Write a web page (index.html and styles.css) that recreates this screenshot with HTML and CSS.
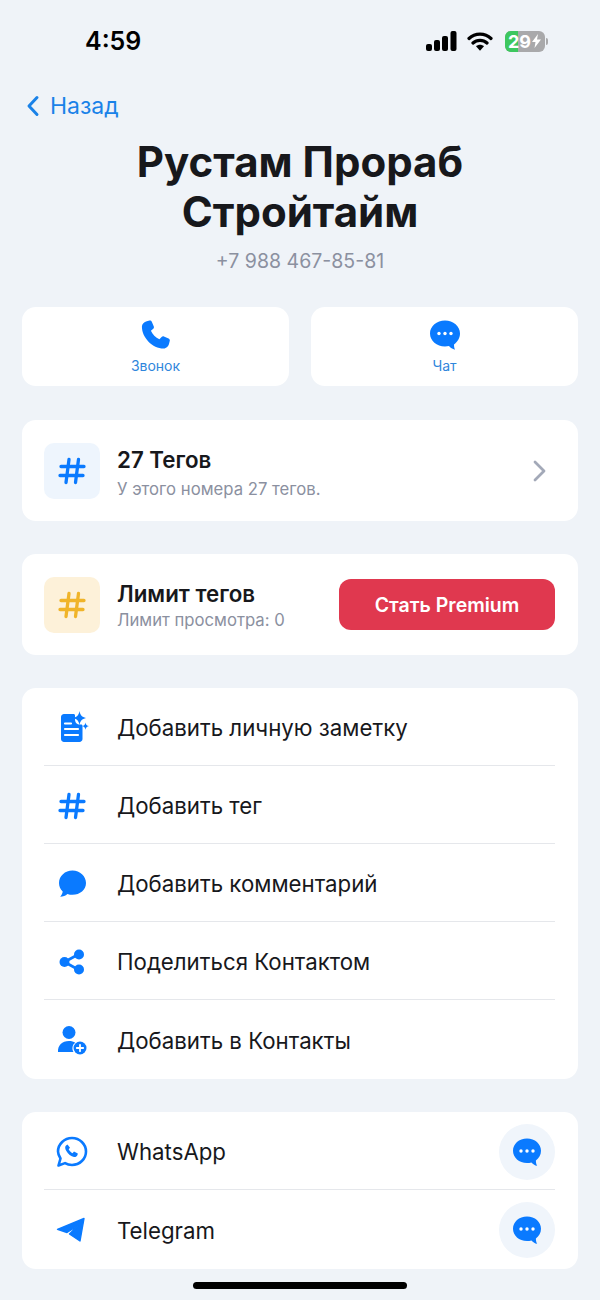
FILE: index.html
```html
<!DOCTYPE html>
<html lang="ru">

<head>
    <meta charset="UTF-8">
    <meta name="viewport" content="width=device-width, initial-scale=1.0">
    <title>Рустам Прораб Стройтайм</title>
    <link rel="stylesheet" href="styles.css">
</head>

<body>
    <svg class="sprite" width="0" height="0">
        <symbol id="hash" viewBox="0 0 28 28">
            <path d="M11 2.500 8 25.500M20.500 2.500 17.500 25.500M3 9.500H26M2 18.500H25" fill="none" stroke="currentColor" stroke-width="3.300" stroke-linecap="round" />
        </symbol>
        <symbol id="bubble" viewBox="0 0 30 30">
            <path d="M15 1.500C7 1.500 1 7 1 13.800 1 20.600 7 26 15 26c1.600 0 3-.2 4.400-.6 1.300 1.500 3.300 3 5.800 3.400-.9-1.300-1.300-3.300-1.300-5.300C27 21.200 29 17.800 29 13.800 29 7 23 1.500 15 1.500Z" fill="currentColor" />
            <circle cx="9" cy="14" r="1.700" fill="#fff" />
            <circle cx="15" cy="14" r="1.700" fill="#fff" />
            <circle cx="21" cy="14" r="1.700" fill="#fff" />
        </symbol>
    </svg>

    <div class="status-bar">
        <span class="time">4:59</span>
        <div class="status-icons">
            <svg width="31" height="20" viewBox="0 0 31 20">
                <rect x="0" y="13" width="6" height="7" rx="2" />
                <rect x="8" y="9" width="6" height="11" rx="2" />
                <rect x="16" y="5" width="6" height="15" rx="2" />
                <rect x="24.500" y="0" width="6" height="20" rx="2" />
            </svg>
            <svg width="26" height="20" viewBox="0 0 26 20">
                <path d="M2 7.500C8 1.700 18 1.700 24 7.500M6 12c3.900-3.600 10.100-3.600 14 0" fill="none" stroke="#000" stroke-width="3.200" stroke-linecap="round" />
                <path d="M9 15.300c2.400-2 5.600-2 8 0L13 19.800Z" />
            </svg>
            <div class="battery">
                <div class="battery-fill"></div>
                <span class="battery-num">29</span>
                <svg class="battery-bolt" width="9" height="14" viewBox="0 0 9 14">
                    <path d="M6 0 0 8h3.500L2.500 14 9 5.500H5Z" fill="#fff" />
                </svg>
            </div>
            <div class="battery-cap"></div>
        </div>
    </div>

    <div class="back">
        <svg width="14" height="22" viewBox="0 0 14 22">
            <path d="M11 2.500 3 11l8 8.500" fill="none" stroke="currentColor" stroke-width="3" stroke-linecap="round" stroke-linejoin="round" />
        </svg>
        <span>Назад</span>
    </div>

    <h1 class="name">Рустам Прораб<br>Стройтайм</h1>
    <p class="phone">+7 988 467-85-81</p>

    <div class="actions">
        <div class="card action">
            <svg class="action-icon" width="30" height="30" viewBox="0 0 30 30">
                <path d="M5.800 1.200 8.500.6c1-.2 1.900.3 2.300 1.200l2 4.600c.3.800.1 1.700-.5 2.300L9.900 10.700c1.500 3.600 4.700 6.900 8.500 8.600l2.200-2.300c.6-.6 1.500-.8 2.300-.5l4.700 2c.9.400 1.400 1.300 1.200 2.300l-.7 2.800c-.6 2.600-2.700 5-5.500 5C11.500 28.600.9 17.600.9 6.500.9 4 3.200 1.800 5.800 1.200Z" fill="currentColor" />
            </svg>
            <span class="action-label">Звонок</span>
        </div>
        <div class="card action">
            <svg class="action-icon" width="30" height="30" viewBox="0 0 30 30">
                <path d="M15 .5C6.700.5 0 6.300 0 13.500 0 20.700 6.700 26.500 15 26.500c1.400 0 2.800-.2 4-.5 1.300 1.500 3.500 3.200 6 3.700-.7-1.400-1-3.200-1-5.200C27.500 22 30 18 30 13.500 30 6.300 23.300.5 15 .5Z" fill="currentColor" />
                <circle cx="9" cy="13.500" r="1.700" fill="#fff" />
                <circle cx="15" cy="13.500" r="1.700" fill="#fff" />
                <circle cx="21" cy="13.500" r="1.700" fill="#fff" />
            </svg>
            <span class="action-label">Чат</span>
        </div>
    </div>

    <div class="card info">
        <div class="tile tile-blue"><svg width="28" height="28"><use href="#hash" /></svg></div>
        <div class="info-text">
            <div class="info-title">27 Тегов</div>
            <div class="info-sub">У этого номера 27 тегов.</div>
        </div>
        <svg class="chevron" width="14" height="22" viewBox="0 0 14 22">
            <path d="M3 2 12 11 3 20" fill="none" stroke="#a3a9b8" stroke-width="2.800" stroke-linecap="round" stroke-linejoin="round" />
        </svg>
    </div>

    <div class="card info info-limit">
        <div class="tile tile-yellow"><svg width="28" height="28"><use href="#hash" /></svg></div>
        <div class="info-text">
            <div class="info-title">Лимит тегов</div>
            <div class="info-sub">Лимит просмотра: 0</div>
        </div>
        <button class="premium">Стать Premium</button>
    </div>

    <div class="card list">
        <div class="row">
            <svg class="row-icon" width="32" height="32" viewBox="0 0 32 32">
                <path d="M8 2h9.500c1 0 1.500.6 1.500 1.500v4c0 3 2 5 5 5h1c1 0 1.500.6 1.500 1.500v13c0 1.600-1.400 3-3 3H8c-1.600 0-3-1.400-3-3V5c0-1.600 1.400-3 3-3Z" fill="currentColor" />
                <path d="M9 11.500h6M9 17h13M9 23h13" stroke="#fff" stroke-width="2.200" stroke-linecap="round" />
                <path d="M23.500-1c.8 4.300 2.400 6 6.500 7-4.100 1-5.700 2.700-6.500 7-.8-4.300-2.400-6-6.500-7 4.100-1 5.700-2.700 6.500-7ZM29.500 10.500c.4 2.200 1.300 3.100 3.500 3.600-2.200.5-3.100 1.400-3.500 3.600-.4-2.200-1.300-3.100-3.500-3.600 2.200-.5 3.100-1.400 3.500-3.600Z" fill="currentColor" />
            </svg>
            <span class="row-text">Добавить личную заметку</span>
        </div>
        <div class="row">
            <svg class="row-icon" width="28" height="28"><use href="#hash" /></svg>
            <span class="row-text">Добавить тег</span>
        </div>
        <div class="row">
            <svg class="row-icon" width="30" height="30" viewBox="0 0 30 30">
                <path d="M15.500 1.500C8 1.500 2 7 2 14c0 3.400 1.400 6.300 3.700 8.500-.2 1.900-1.200 3.900-2.500 5.200 2.800-.1 5.400-1.100 7.200-2.800 1.600.6 3.300.9 5.100.9 7.500 0 13.500-5 13.500-11.800S23 1.500 15.500 1.500Z" fill="currentColor" />
            </svg>
            <span class="row-text">Добавить комментарий</span>
        </div>
        <div class="row">
            <svg class="row-icon" width="28" height="28" viewBox="0 0 28 28">
                <path d="M6.500 14 21 6M6.500 14 21 22" stroke="currentColor" stroke-width="2.600" />
                <circle cx="6.500" cy="14" r="5" fill="currentColor" />
                <circle cx="21" cy="6.500" r="5" fill="currentColor" />
                <circle cx="21" cy="21.500" r="5" fill="currentColor" />
            </svg>
            <span class="row-text">Поделиться Контактом</span>
        </div>
        <div class="row">
            <svg class="row-icon" width="30" height="30" viewBox="0 0 30 30">
                <circle cx="12" cy="7.500" r="6.500" fill="currentColor" />
                <path d="M1 27c-.4-6.500 4-11 11-11 2.500 0 4.700.6 6.300 1.700C15.500 19 14.500 24 16.500 27Z" fill="currentColor" />
                <circle cx="23" cy="23" r="6.500" fill="currentColor" />
                <path d="M23 19.800v6.400M19.800 23h6.400" stroke="#fff" stroke-width="1.800" stroke-linecap="round" />
            </svg>
            <span class="row-text">Добавить в Контакты</span>
        </div>
    </div>

    <div class="card list">
        <div class="row">
            <svg class="row-icon" width="32" height="32" viewBox="0 0 32 32">
                <path d="M2.500 29.500 4.500 22.500C3 20 2 18 2 15.500 2 8 8.300 2 16 2s14 6 14 13.500S23.700 29 16 29c-2.500 0-5-.7-7-1.900Z" fill="none" stroke="currentColor" stroke-width="2.600" stroke-linejoin="round" />
                <path d="M11.500 8.500 10 9.500c-1.200 1-1 3 .2 5.300 1.700 3.200 5 5.800 7.800 6.200 1.500.2 3-.6 3.500-2l.3-1.400-3.800-2-1.500 1.600c-1.600-.7-3-2.200-3.800-3.900l1.300-1.500Z" fill="currentColor" />
            </svg>
            <span class="row-text">WhatsApp</span>
            <div class="chat-btn"><svg width="30" height="30"><use href="#bubble" /></svg></div>
        </div>
        <div class="row">
            <svg class="row-icon" width="32" height="32" viewBox="0 0 32 32">
                <path d="M1.500 15.300 28 4.500 24 27 13.500 20 22 11.500 11 18.500Z" fill="currentColor" stroke="currentColor" stroke-width="1.400" stroke-linejoin="round" />
            </svg>
            <span class="row-text">Telegram</span>
            <div class="chat-btn"><svg width="30" height="30"><use href="#bubble" /></svg></div>
        </div>
    </div>

    <div class="home-indicator"></div>
</body>

</html>
```

FILE: styles.css
```css
* {
    margin: 0;
    padding: 0;
    box-sizing: border-box;
}

html,
body {
    height: 1300px;
    overflow: hidden;
}

body {
    position: relative;
    background-color: #eff3f8;
    font-family: Inter, 'Liberation Sans', sans-serif;
    color: #17181c;
    padding: 0 22px;
}

.sprite {
    position: absolute;
}

.status-bar {
    display: flex;
    justify-content: space-between;
    align-items: center;
    height: 82px;
    padding: 0 30px 0 63px;
}

.time {
    font-size: 25px;
    font-weight: 600;
    color: #000;
}

.status-icons {
    display: flex;
    align-items: center;
}

.status-icons > svg {
    margin-right: 10px;
}

.battery {
    position: relative;
    display: flex;
    align-items: center;
    width: 40px;
    height: 21px;
    margin-left: 2px;
    background-color: #a9a9ab;
    border-radius: 6px;
    overflow: hidden;
}

.battery-fill {
    position: absolute;
    left: 0;
    top: 0;
    bottom: 0;
    width: 13px;
    background-color: #3dc75f;
}

.battery-num {
    position: relative;
    padding-left: 3px;
    font-size: 18px;
    font-weight: 700;
    color: #fff;
}

.battery-bolt {
    position: relative;
    margin-left: 1px;
}

.battery-cap {
    width: 2px;
    height: 7px;
    margin-left: 1px;
    background-color: #a9a9ab;
    border-radius: 0 2px 2px 0;
}

.back {
    display: flex;
    align-items: center;
    gap: 10px;
    height: 48px;
    padding-left: 4px;
    color: #1a82e8;
    font-size: 23px;
}

.name {
    margin-top: 7px;
    font-size: 42px;
    line-height: 50px;
    font-weight: 700;
    text-align: center;
}

.phone {
    margin-top: 11px;
    font-size: 19.500px;
    line-height: 26px;
    text-align: center;
    color: #8b90a0;
}

.card {
    background-color: #fff;
    border-radius: 14px;
}

.actions {
    display: flex;
    gap: 22px;
    margin-top: 33px;
}

.action {
    flex: 1;
    height: 79px;
    display: flex;
    flex-direction: column;
    align-items: center;
    padding-top: 13px;
}

.action-icon {
    color: #0a7aff;
}

.action-label {
    margin-top: 7px;
    font-size: 14px;
    line-height: 18px;
    color: #2f86dc;
}

.info {
    display: flex;
    align-items: center;
    height: 101px;
    margin-top: 33px;
    padding: 0 23px 0 22px;
}

.actions + .info {
    margin-top: 34px;
}

.tile {
    display: flex;
    justify-content: center;
    align-items: center;
    flex-shrink: 0;
    width: 56px;
    height: 56px;
    border-radius: 10px;
}

.tile-blue {
    background-color: #eef5fd;
    color: #0a7aff;
}

.tile-yellow {
    background-color: #fdf1d9;
    color: #f0b429;
}

.info-text {
    flex: 1;
    margin-left: 17px;
    padding-top: 4px;
}

.info-title {
    font-size: 22.300px;
    line-height: 30px;
    font-weight: 600;
}

.info-sub {
    margin-top: 3px;
    font-size: 16.700px;
    line-height: 22px;
    color: #8b90a0;
}

.info-limit .info-text {
    padding-top: 3px;
}

.info-limit .info-title {
    line-height: 26px;
}

.info-limit .info-sub {
    margin-top: 2px;
}

.chevron {
    margin-right: 9px;
}

.premium {
    width: 216px;
    height: 51px;
    border: none;
    border-radius: 12px;
    background-color: #e0384f;
    color: #fff;
    font-family: inherit;
    font-size: 19.500px;
    font-weight: 600;
}

.list {
    margin-top: 33px;
    padding: 0 23px 1px 22px;
}

.row {
    display: flex;
    align-items: center;
    height: 78px;
    padding-top: 2px;
    border-bottom: 1px solid #e5e7eb;
}

.row:last-child {
    border-bottom: none;
}

.row-icon {
    flex-shrink: 0;
    width: 32px;
    margin: 0 29px 0 12px;
    color: #0a7aff;
    overflow: visible;
}

.row-text {
    flex: 1;
    font-size: 22.250px;
    font-weight: 400;
}

.chat-btn {
    display: flex;
    justify-content: center;
    align-items: center;
    width: 56px;
    height: 56px;
    border-radius: 50%;
    background-color: #f0f5fb;
    color: #0a7aff;
}

.home-indicator {
    position: absolute;
    left: 193px;
    bottom: 11px;
    width: 214px;
    height: 7px;
    border-radius: 4px;
    background-color: #000;
}
```
